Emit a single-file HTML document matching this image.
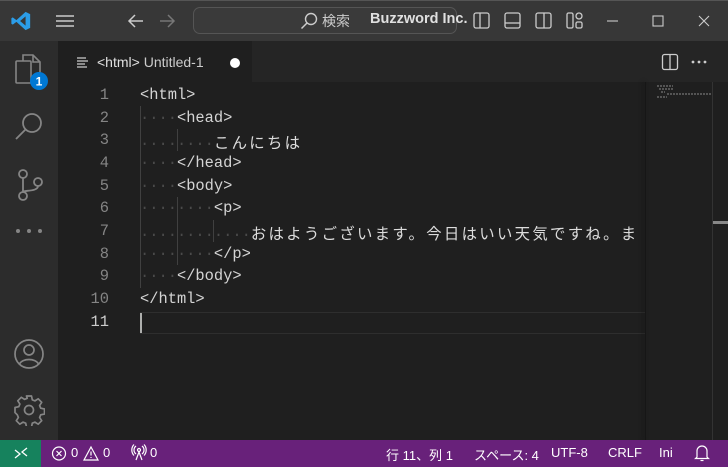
<!DOCTYPE html>
<html><head><meta charset="utf-8"><style>
*{margin:0;padding:0;box-sizing:border-box}
body{width:728px;height:467px;overflow:hidden;background:#1f1f1f;font-family:"Liberation Sans","Noto Sans CJK JP",sans-serif;position:relative;color:#ccc}
.abs{position:absolute}
#title{left:0;top:0;width:728px;height:41px;background:#373737;border-top:1px solid #555}
#search{left:193px;top:7px;width:264px;height:27px;border:1px solid #555;border-radius:7px;background:#3a3a3a}
#act{left:0;top:41px;width:58px;height:399px;background:#2c2c2c}
#tabs{left:58px;top:41px;width:670px;height:41px;background:#252525}
#tab{left:58px;top:41px;width:194px;height:41px;background:#1f1f1f}
#status{left:0;top:440px;width:728px;height:27px;background:#68217a;color:#fff;font-size:14px}
#remote{left:0;top:440px;width:41px;height:27px;background:#16825d}
.code{font-family:"Liberation Mono","Noto Sans CJK JP",monospace;font-size:15.4px;white-space:pre}
.ln{left:70px;width:39px;text-align:right;color:#858585}
.line{left:140px;color:#d4d4d4}
.dot{color:#4a4a4a}
.jp{letter-spacing:2.3px;color:#dcdcdc}
.guide{width:1px;background:#404040}
.st{top:445px;font-size:13px;color:#fff;white-space:pre}
svg{position:absolute}
</style></head><body>
<div id="title" class="abs"></div>
<svg style="left:10px;top:10px" width="22" height="22" viewBox="0 0 24 24"><path d="M17 2 L22 4.5 V19.5 L17 22 L7 13 L3 16 L1.5 15 V9 L3 8 L7 11 Z M17 7 L11 12 L17 17 Z" fill="#2b9de8"/></svg>
<svg style="left:55px;top:13px" width="20" height="16"><path d="M1 3h18M1 8h18M1 13h18" stroke="#ccc" stroke-width="1.4"/></svg>
<svg style="left:127px;top:12px" width="18" height="18"><path d="M16 9H3M8 3L2 9l6 6" stroke="#ccc" stroke-width="1.5" fill="none"/></svg>
<svg style="left:158px;top:12px" width="18" height="18"><path d="M2 9h13M10 3l6 6-6 6" stroke="#777" stroke-width="1.5" fill="none"/></svg>
<div id="search" class="abs"></div>
<svg style="left:300px;top:12px" width="18" height="18"><circle cx="11" cy="7" r="5.5" stroke="#ccc" stroke-width="1.4" fill="none"/><path d="M7 11L1.5 16.5" stroke="#ccc" stroke-width="1.5"/></svg>
<div class="abs" style="left:322px;top:11px;font-size:14px;color:#ccc">検索</div>
<div class="abs" style="left:370px;top:11px;font-size:14.5px;font-weight:bold;color:#e0e0e0">Buzzword Inc.</div>
<svg style="left:472px;top:11px" width="120" height="20" fill="none" stroke="#ccc" stroke-width="1.3">
<rect x="2" y="2" width="15" height="15" rx="2"/><path d="M8 2v15"/>
<rect x="33" y="2" width="15" height="15" rx="2"/><path d="M33 12h15"/>
<rect x="64" y="2" width="15" height="15" rx="2"/><path d="M72 2v15"/>
<rect x="95" y="2" width="6" height="15" rx="1.5"/><rect x="104" y="2" width="6" height="6" rx="3"/><rect x="104" y="11" width="6" height="6" rx="1.5"/>
</svg>
<svg style="left:600px;top:10px" width="128" height="22" fill="none" stroke="#ccc" stroke-width="1.1">
<path d="M7 11h11"/><rect x="53" y="6" width="10" height="10"/><path d="M99 6l10 10M109 6l-10 10"/>
</svg>
<div id="act" class="abs"></div>
<svg style="left:13px;top:52px" width="36" height="40" fill="none" stroke="#858585" stroke-width="1.6"><path d="M10 9V3h10l7 7v16h-6"/><path d="M20 3v7h7"/><rect x="3" y="9" width="15" height="22" rx="1"/><circle cx="26" cy="29" r="9" fill="#0078d4" stroke="none"/><text x="26" y="33.5" font-size="12" font-weight="bold" fill="#fff" stroke="none" text-anchor="middle" font-family="Liberation Sans">1</text></svg>
<svg style="left:14px;top:110px" width="32" height="32" fill="none" stroke="#858585" stroke-width="1.8"><circle cx="18" cy="13" r="9"/><path d="M11.5 19.5L2 29"/></svg>
<svg style="left:14px;top:168px" width="32" height="36" fill="none" stroke="#858585" stroke-width="1.8"><circle cx="9" cy="6" r="4"/><circle cx="9" cy="28" r="4"/><circle cx="24" cy="14" r="4"/><path d="M9 10v14M24 18c0 6-15 4-15 6"/></svg>
<svg style="left:15px;top:228px" width="28" height="6"><circle cx="3" cy="3" r="2" fill="#858585"/><circle cx="14" cy="3" r="2" fill="#858585"/><circle cx="25" cy="3" r="2" fill="#858585"/></svg>
<svg style="left:13px;top:338px" width="32" height="32" fill="none" stroke="#858585" stroke-width="1.7"><circle cx="16" cy="16" r="14"/><circle cx="16" cy="12" r="5"/><path d="M6.5 26c3-6 16-6 19 0"/></svg>
<svg style="left:13px;top:394px" width="32" height="32" fill="none" stroke="#858585" stroke-width="1.7" stroke-linejoin="round">
<path d="M13.5 2h5l0.8 3.8 2.6 1.1 3.3-2.1 3.5 3.5-2.1 3.3 1.1 2.6 3.8 0.8v5l-3.8 0.8-1.1 2.6 2.1 3.3-3.5 3.5-3.3-2.1-2.6 1.1-0.8 3.8h-5l-0.8-3.8-2.6-1.1-3.3 2.1-3.5-3.5 2.1-3.3-1.1-2.6L2 18.5v-5l3.8-0.8 1.1-2.6-2.1-3.3 3.5-3.5 3.3 2.1 2.6-1.1z"/><circle cx="16" cy="16" r="4.5"/></svg>
<div id="tabs" class="abs"></div>
<div id="tab" class="abs"></div>
<svg style="left:77px;top:57px" width="12" height="11"><path d="M0 1h9M0 4h11M0 7h8M0 10h10" stroke="#ccc" stroke-width="1.3"/></svg>
<div class="abs" style="left:97px;top:54px;font-size:14px;color:#e0e0e0">&lt;html&gt; <span style="color:#ccc">Untitled-1</span></div>
<div class="abs" style="left:230px;top:58px;width:10px;height:10px;border-radius:5px;background:#fff"></div>
<svg style="left:661px;top:53px" width="18" height="18" fill="none" stroke="#ccc" stroke-width="1.3"><rect x="1.5" y="1.5" width="15" height="15" rx="2"/><path d="M9 1.5v15"/></svg>
<svg style="left:691px;top:60px" width="18" height="4"><circle cx="2" cy="2" r="1.4" fill="#ccc"/><circle cx="8" cy="2" r="1.4" fill="#ccc"/><circle cx="14" cy="2" r="1.4" fill="#ccc"/></svg>
<div class="abs" style="left:140px;top:312px;width:505px;height:22px;border-top:1px solid #2e2e2e;border-bottom:1px solid #2e2e2e"></div>
<div class="abs" style="left:140px;top:313px;width:2px;height:20px;background:#aeafad"></div>
<div class="abs" style="left:645px;top:82px;width:1px;height:358px;background:#161616;box-shadow:-2px 0 4px #111"></div>
<div class="abs" style="left:712px;top:82px;width:1px;height:358px;background:#333"></div>
<div class="abs" style="left:713px;top:221px;width:15px;height:3px;background:#888"></div>
<svg style="left:655px;top:84px" width="58" height="16"><path d="M2 2h16M4 5h14M6 8h4M12 10h45M2 13h10" stroke="#666" stroke-width="1.5" stroke-dasharray="2 1"/></svg>
<div class="abs guide" style="left:140px;top:106px;height:182px"></div>
<div class="abs guide" style="left:177px;top:129px;height:22px"></div>
<div class="abs guide" style="left:177px;top:197px;height:68px"></div>
<div class="abs guide" style="left:213px;top:220px;height:22px"></div>
<div class="code">
<div class="abs ln" style="top:86px">1</div>
<div class="abs ln" style="top:109px">2</div>
<div class="abs ln" style="top:131px">3</div>
<div class="abs ln" style="top:154px">4</div>
<div class="abs ln" style="top:177px">5</div>
<div class="abs ln" style="top:199px">6</div>
<div class="abs ln" style="top:222px">7</div>
<div class="abs ln" style="top:245px">8</div>
<div class="abs ln" style="top:267px">9</div>
<div class="abs ln" style="top:290px">10</div>
<div class="abs ln" style="top:313px;color:#ccc">11</div>
<div class="abs line" style="top:86px">&lt;html&gt;</div>
<div class="abs line" style="top:109px"><span class="dot">····</span>&lt;head&gt;</div>
<div class="abs line" style="top:131px"><span class="dot">········</span><span class="jp">こんにちは</span></div>
<div class="abs line" style="top:154px"><span class="dot">····</span>&lt;/head&gt;</div>
<div class="abs line" style="top:177px"><span class="dot">····</span>&lt;body&gt;</div>
<div class="abs line" style="top:199px"><span class="dot">········</span>&lt;p&gt;</div>
<div class="abs line" style="top:222px;width:505px;overflow:hidden"><span class="dot">············</span><span class="jp">おはようございます。今日はいい天気ですね。ま</span></div>
<div class="abs line" style="top:245px"><span class="dot">········</span>&lt;/p&gt;</div>
<div class="abs line" style="top:267px"><span class="dot">····</span>&lt;/body&gt;</div>
<div class="abs line" style="top:290px">&lt;/html&gt;</div>
</div>
<div id="status" class="abs"></div>
<div id="remote" class="abs"></div>
<svg style="left:13px;top:446px" width="16" height="14"><path d="M2 12l5-4-5-4M14 2l-5 4 5 4" stroke="#fff" stroke-width="1.3" fill="none"/></svg>
<svg style="left:51px;top:445px" width="70" height="17" fill="none" stroke="#fff" stroke-width="1.2"><circle cx="8" cy="8.5" r="6.5"/><path d="M5.5 6l5 5M10.5 6l-5 5"/><path d="M40 2l7 13H33z"/><path d="M40 6.5v4M40 12v1"/></svg>
<div class="abs st" style="left:71px">0</div>
<div class="abs st" style="left:103px">0</div>
<svg style="left:131px;top:444px" width="16" height="18" fill="none" stroke="#fff" stroke-width="1.2"><circle cx="8" cy="6" r="1.5"/><path d="M8 8l-3 8M8 8l3 8M5 2a5 5 0 0 0 0 8M11 2a5 5 0 0 1 0 8M3 0.5a8 8 0 0 0 0 11M13 0.5a8 8 0 0 1 0 11"/></svg>
<div class="abs st" style="left:150px">0</div>
<div class="abs st" style="left:386px">行 11、列 1</div>
<div class="abs st" style="left:474px">スペース: 4</div>
<div class="abs st" style="left:551px">UTF-8</div>
<div class="abs st" style="left:608px">CRLF</div>
<div class="abs st" style="left:659px">Ini</div>
<svg style="left:694px;top:444px" width="16" height="18" fill="none" stroke="#fff" stroke-width="1.2"><path d="M3 13V7a5 5 0 0 1 10 0v6l1.5 1.5h-13z"/><path d="M6.5 16.5h3"/></svg>
</body></html>
